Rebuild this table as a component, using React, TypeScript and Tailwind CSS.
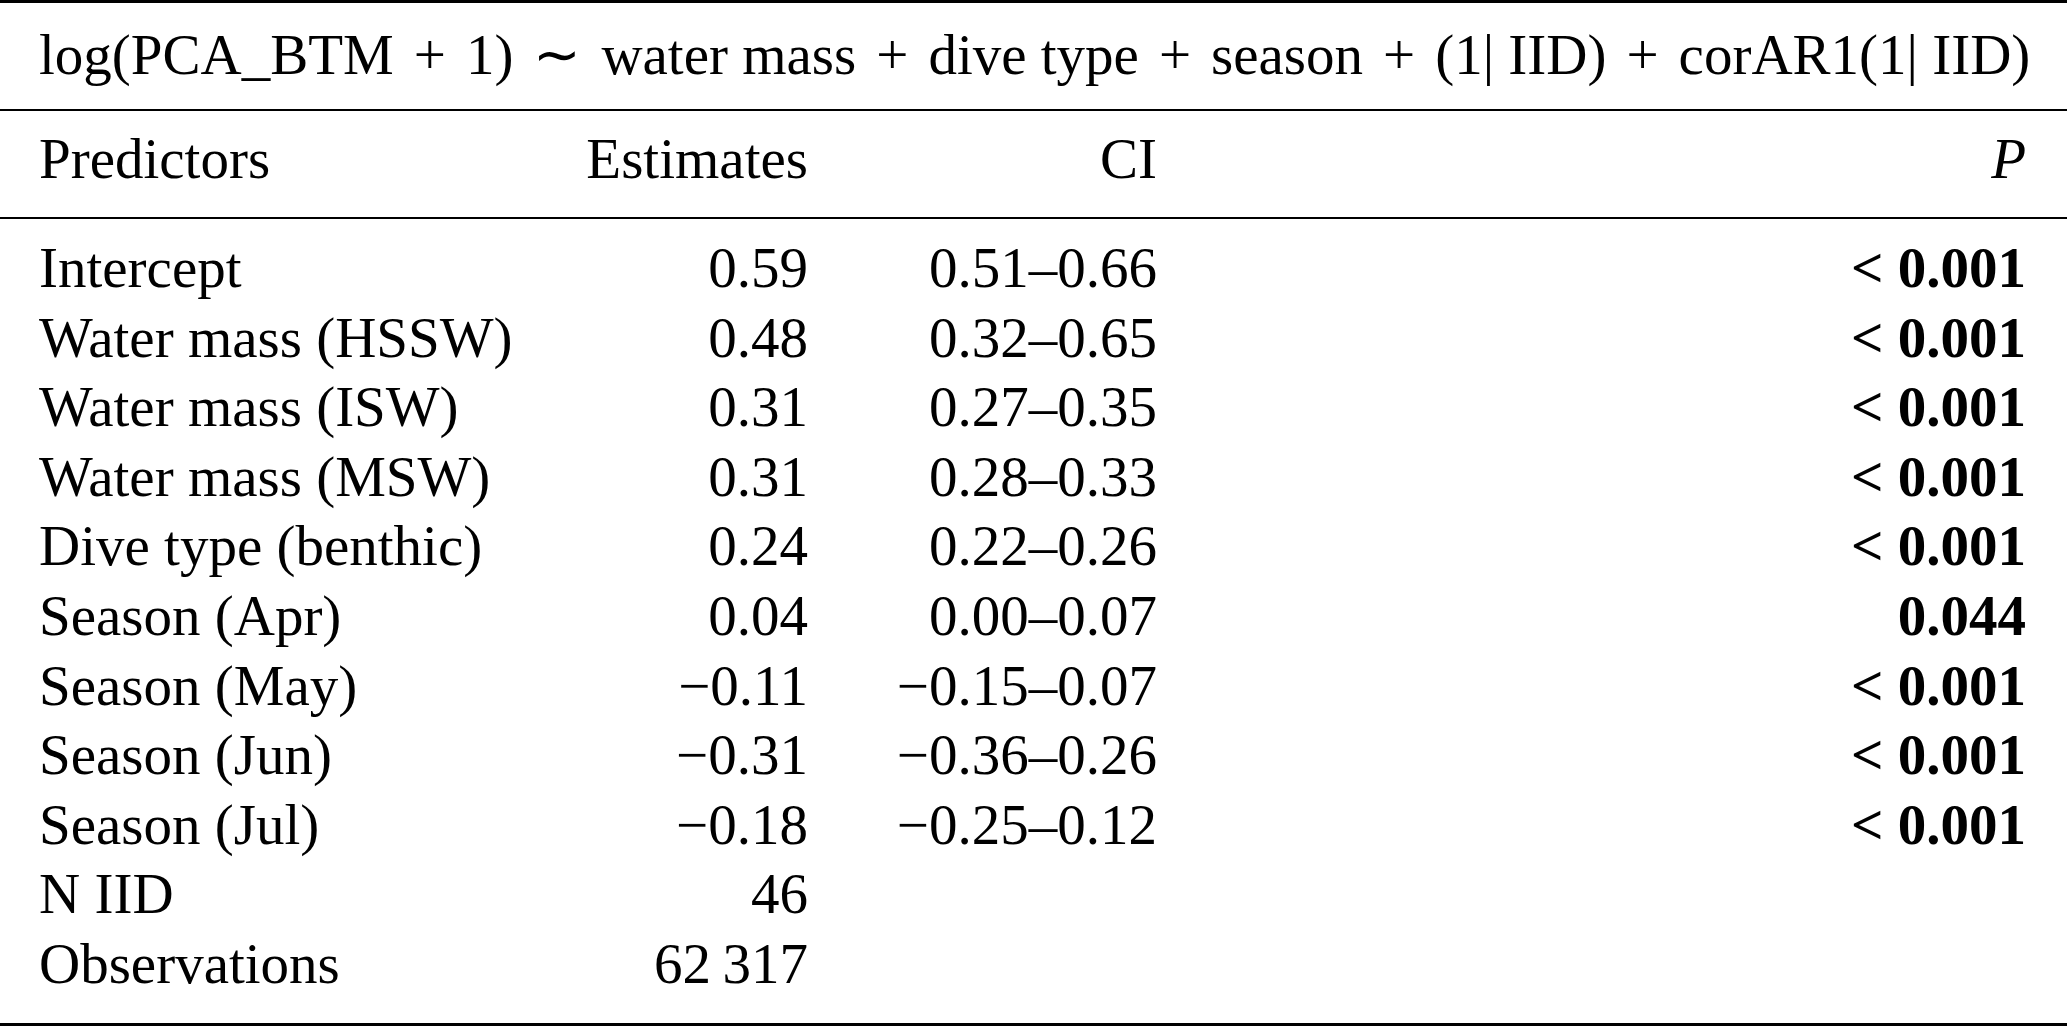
const rows: { name: string; est: string; ci: string; p: string }[] = [
  { name: "Intercept", est: "0.59", ci: "0.51–0.66", p: "< 0.001" },
  { name: "Water mass (HSSW)", est: "0.48", ci: "0.32–0.65", p: "< 0.001" },
  { name: "Water mass (ISW)", est: "0.31", ci: "0.27–0.35", p: "< 0.001" },
  { name: "Water mass (MSW)", est: "0.31", ci: "0.28–0.33", p: "< 0.001" },
  { name: "Dive type (benthic)", est: "0.24", ci: "0.22–0.26", p: "< 0.001" },
  { name: "Season (Apr)", est: "0.04", ci: "0.00–0.07", p: "0.044" },
  { name: "Season (May)", est: "−0.11", ci: "−0.15–0.07", p: "< 0.001" },
  { name: "Season (Jun)", est: "−0.31", ci: "−0.36–0.26", p: "< 0.001" },
  { name: "Season (Jul)", est: "−0.18", ci: "−0.25–0.12", p: "< 0.001" },
  { name: "N IID", est: "46", ci: "", p: "" },
  { name: "Observations", est: "62\u2009317", ci: "", p: "" },
]

const grid = "grid grid-cols-[480px_289px_349px_1fr] pl-[39px] pr-[41px]"

// binary operator with math-style spacing
function Op({ children }: { children: string }) {
  return <span className="px-[20px]">{children}</span>
}

export default function App() {
  return (
    <div className="h-[1026px] w-[2067px] bg-white font-['Liberation_Serif','Times_New_Roman',serif] text-[57px] leading-[70px] text-black">
      {/* model formula */}
      <div className="border-t-[3px] border-black pl-[39px] pr-[41px] pt-[17px] pb-[19px] whitespace-nowrap">
        log(PCA_BTM<Op>+</Op>1)<Op>∼</Op>water mass<Op>+</Op>dive type<Op>+</Op>season<Op>+</Op>(1| IID)<Op>+</Op>corAR1(1| IID)
      </div>

      {/* column heads */}
      <div className={`${grid} border-t-2 border-black pt-[13px] pb-[23px]`}>
        <div>Predictors</div>
        <div className="text-right">Estimates</div>
        <div className="text-right">CI</div>
        <div className="text-right italic">P</div>
      </div>

      {/* body */}
      <div className="border-t-2 border-b-[3px] border-black pt-[14px] pb-[24px]">
        {rows.map((r) => (
          <div key={r.name} className={`${grid} leading-[69.6px]`}>
            <div className="whitespace-nowrap">{r.name}</div>
            <div className="text-right whitespace-nowrap">{r.est}</div>
            <div className="text-right whitespace-nowrap">{r.ci}</div>
            <div className="text-right font-bold whitespace-nowrap">{r.p}</div>
          </div>
        ))}
      </div>
    </div>
  )
}
